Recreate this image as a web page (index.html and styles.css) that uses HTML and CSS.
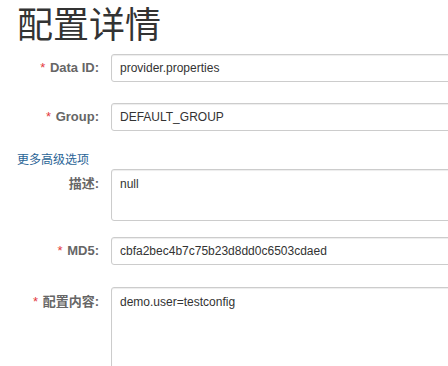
FILE: index.html
```html
<!DOCTYPE html>
<html lang="zh-CN">

<head>
  <meta charset="UTF-8" />
  <meta name="viewport" content="width=device-width, initial-scale=1.0" />
  <title>配置详情</title>
  <link rel="stylesheet" href="styles.css">
</head>

<body>
  <h1 class="page-title">配置详情</h1>

  <form class="config-form">
    <div class="form-row row-dataid">
      <label class="form-label"><span class="required">*</span> Data ID:</label>
      <input class="form-input" type="text" value="provider.properties" readonly>
    </div>

    <div class="form-row row-group">
      <label class="form-label"><span class="required">*</span> Group:</label>
      <input class="form-input" type="text" value="DEFAULT_GROUP" readonly>
    </div>

    <a class="more-link" href="#">更多高级选项</a>

    <div class="form-row row-desc">
      <label class="form-label label-top">描述:</label>
      <textarea class="form-input desc-area" readonly>null</textarea>
    </div>

    <div class="form-row row-md5">
      <label class="form-label"><span class="required">*</span> MD5:</label>
      <input class="form-input" type="text" value="cbfa2bec4b7c75b23d8dd0c6503cdaed" readonly>
    </div>

    <div class="form-row row-content">
      <label class="form-label label-top"><span class="required">*</span> 配置内容:</label>
      <textarea class="form-input content-area" readonly>demo.user=testconfig</textarea>
    </div>
  </form>
</body>

</html>
```

FILE: styles.css
```css
html,
body {
  overflow: hidden;
}

body {
  margin: 0;
  padding: 0 0 0 17px;
  font-family: "Liberation Sans", Arial, "Noto Sans CJK SC", sans-serif;
  font-size: 12px;
  color: #333;
  background: #fff;
}

.page-title {
  margin: 0 0 10px;
  padding: 0;
  font-family: "Noto Sans CJK SC", sans-serif;
  font-size: 36px;
  font-weight: 400;
  line-height: 44px;
  color: #333;
}

.form-row {
  display: flex;
  align-items: flex-start;
}

.form-label {
  flex: 0 0 82px;
  padding-right: 12px;
  text-align: right;
  font-size: 13px;
  font-weight: bold;
  line-height: 28px;
  color: #666;
  white-space: nowrap;
}

.label-top {
  line-height: 16px;
  padding-top: 7px;
}

.required {
  color: #e4393c;
  font-weight: normal;
  margin-right: 1px;
}

.form-input {
  flex: 0 0 auto;
  box-sizing: border-box;
  width: 400px;
  height: 28px;
  margin: 0;
  padding: 0 8px;
  font-family: inherit;
  font-size: 12px;
  color: #333;
  background: #fff;
  border: 1px solid #ccc;
  border-radius: 3px;
  box-shadow: inset 0 1px 1px rgba(0, 0, 0, 0.075);
  outline: none;
}

textarea.form-input {
  padding: 6px 8px;
  line-height: 16px;
  resize: none;
}

.desc-area {
  height: 52px;
}

.content-area {
  height: 110px;
}

.row-dataid {
  margin-bottom: 21px;
}

.row-group {
  margin-bottom: 21px;
}

.more-link {
  display: block;
  margin-bottom: 1px;
  line-height: 16px;
  color: #2a6496;
  text-decoration: none;
}

.row-desc {
  margin-bottom: 16px;
}

.row-md5 {
  margin-bottom: 22px;
}
```
